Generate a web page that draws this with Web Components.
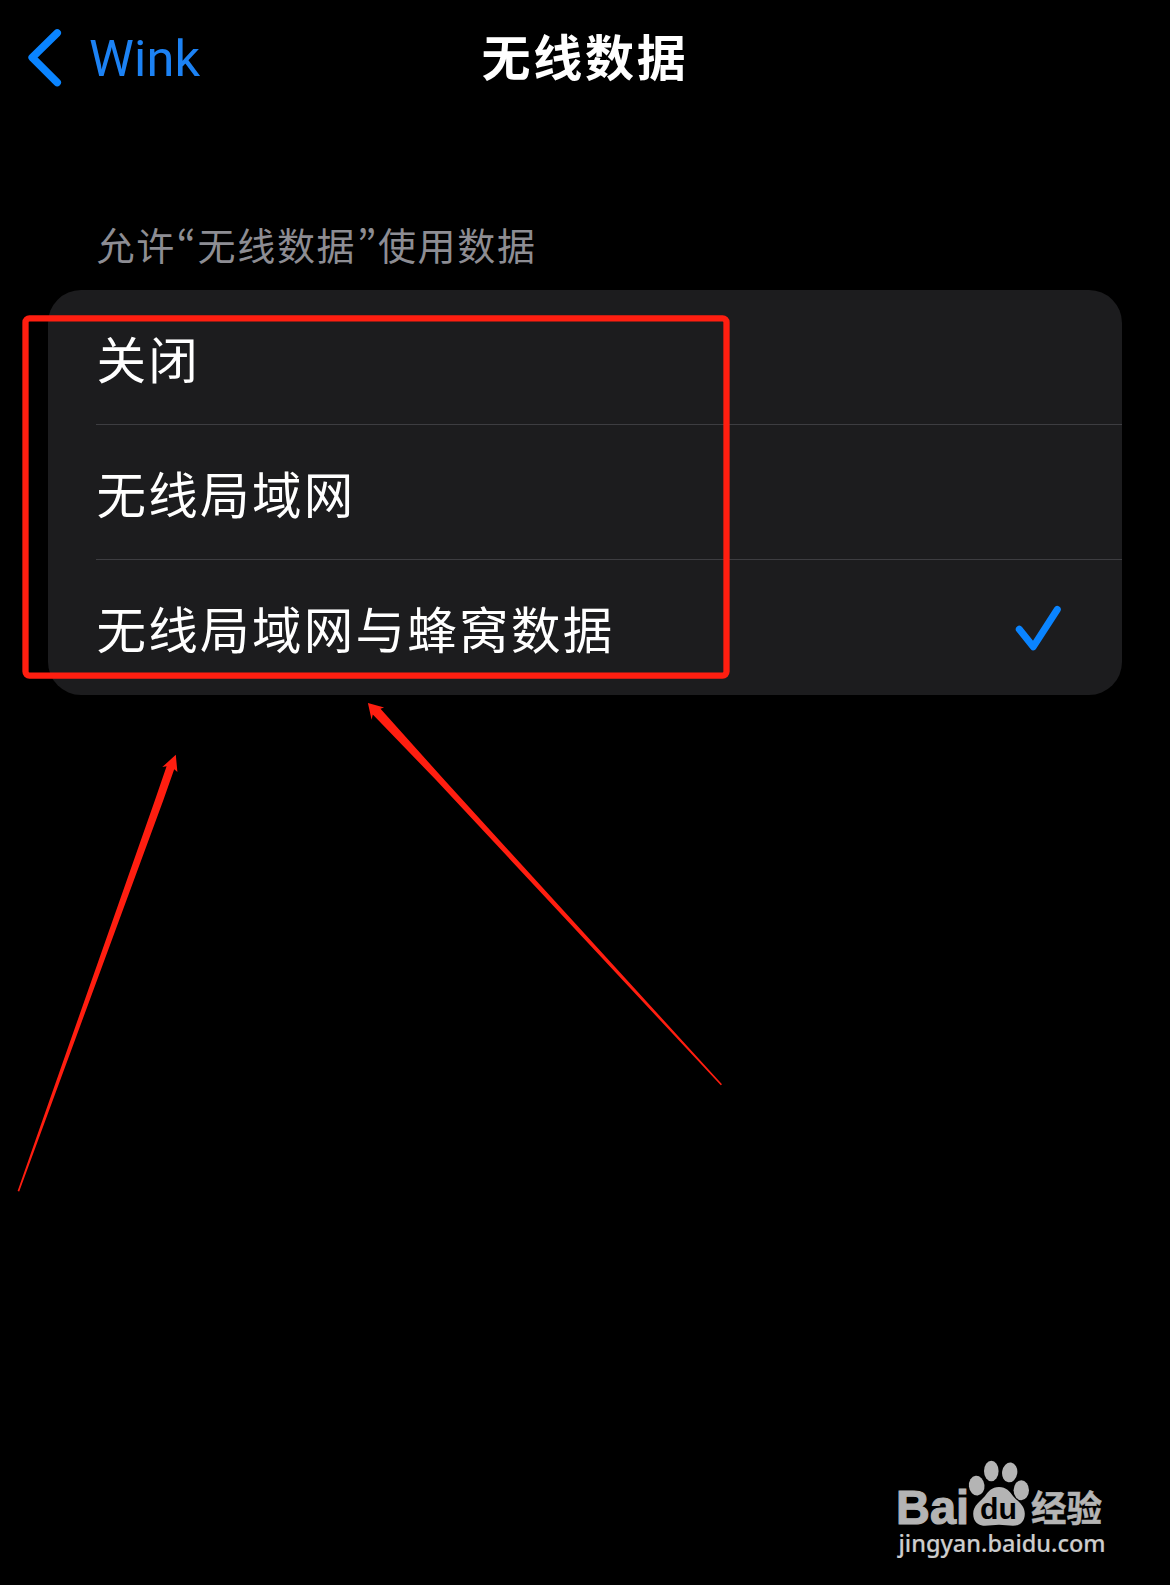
<!DOCTYPE html>
<html lang="zh-CN">
<head>
<meta charset="utf-8">
<title>无线数据</title>
<style>
  html, body {
    margin: 0;
    background: #000;
  }

  body {
    position: relative;
    width: 1170px;
    height: 1585px;
    overflow: hidden;
    color: #fff;
    font-family: Roboto, "Noto Sans CJK SC", sans-serif;
  }
</style>
</head>
<body>
  <x-navbar back="Wink">无线数据</x-navbar>
  <x-group>
    <span slot="header">允许<x-quote>“</x-quote>无线数据<x-quote>”</x-quote>使用数据</span>
    <x-row>关闭</x-row>
    <x-row>无线局域网</x-row>
    <x-row selected>无线局域网与蜂窝数据</x-row>
  </x-group>
  <x-markup></x-markup>
  <x-watermark></x-watermark>

<script>
class XNavbar extends HTMLElement {
  constructor() {
    super();
    this.attachShadow({ mode: 'open' });
    this.shadowRoot.innerHTML = `
      <style>
        :host {
          display: grid;
          grid-template-columns: 1fr auto 1fr;
          align-items: center;
          height: 116px;
          padding: 0 25px;
        }

        .back {
          display: flex;
          align-items: center;
          gap: 24px;
          color: #0a84ff;
          font-size: 50.5px;
          line-height: 60px;
        }

        .back span {
          padding-top: 1px;
          color: #1c82f4;
          letter-spacing: .2px;
        }

        svg {
          display: block;
          fill: none;
          stroke: currentColor;
          stroke-width: 7.6;
          stroke-linecap: round;
          stroke-linejoin: round;
        }

        h1 {
          margin: 0;
          padding-top: 4px;
          font-size: 49px;
          font-weight: 700;
          line-height: 60px;
          letter-spacing: 2.8px;
        }
      </style>
      <div class="back">
        <svg width="40" height="60" viewBox="0 0 40 60">
          <path d="M32.2 5L7.2 29.5l25 25"/>
        </svg>
        <span></span>
      </div>
      <h1><slot></slot></h1>
    `;
  }

  connectedCallback() {
    this.shadowRoot.querySelector('span').textContent = this.getAttribute('back') || '';
  }
}

class XQuote extends HTMLElement {
  constructor() {
    super();
    this.attachShadow({ mode: 'open' });
    this.shadowRoot.innerHTML = `
      <style>
        :host {
          display: inline-block;
          width: 20.6px;
          padding-right: 1px;
          text-align: center;
          letter-spacing: 0;
          font-family: "Noto Sans CJK KR", sans-serif;
          font-size: 41px;
          line-height: 38px;
        }
      </style>
      <slot></slot>
    `;
  }
}

class XGroup extends HTMLElement {
  constructor() {
    super();
    this.attachShadow({ mode: 'open' });
    this.shadowRoot.innerHTML = `
      <style>
        :host {
          display: block;
          padding: 104px 48px 0;
        }

        header {
          height: 70px;
          padding-left: 48.5px;
          color: #8d8d93;
          font-size: 38px;
          line-height: 54px;
          letter-spacing: 1.7px;
          white-space: nowrap;
        }

        .card {
          height: 405px;
          border-radius: 33px;
          background: #1c1c1e;
          overflow: hidden;
        }
      </style>
      <header><slot name="header"></slot></header>
      <div class="card"><slot></slot></div>
    `;
  }
}

class XRow extends HTMLElement {
  constructor() {
    super();
    this.attachShadow({ mode: 'open' });
    this.shadowRoot.innerHTML = `
      <style>
        :host {
          display: block;
          height: 135px;
          padding-left: 48px;
        }

        .row {
          box-sizing: border-box;
          display: flex;
          align-items: center;
          justify-content: space-between;
          height: 135px;
          padding: 4px 60px 0 .5px;
          border-bottom: 1px solid #3d3d41;
          font-size: 49.5px;
          line-height: 70px;
          letter-spacing: 2.3px;
        }

        .label {
          padding-top: 5px;
        }

        :host(:last-of-type) .row {
          border-bottom-color: transparent;
        }

        svg {
          display: none;
          fill: none;
          stroke: #0a84ff;
          stroke-width: 7;
          stroke-linecap: round;
          stroke-linejoin: round;
        }

        :host([selected]) svg {
          display: block;
        }
      </style>
      <div class="row">
        <span class="label"><slot></slot></span>
        <svg width="48" height="48" viewBox="0 0 48 48">
          <path d="M5.3 24.3l14 17.4L43.3 4.5"/>
        </svg>
      </div>
    `;
  }
}

// Red frame and arrows drawn over the page
class XMarkup extends HTMLElement {
  constructor() {
    super();
    this.attachShadow({ mode: 'open' });
    this.shadowRoot.innerHTML = `
      <style>
        :host {
          position: absolute;
          inset: 0;
          pointer-events: none;
        }

        svg {
          display: block;
        }
      </style>
      <svg width="1170" height="1585" viewBox="0 0 1170 1585" fill="#ff1e10">
        <rect x="25.5" y="318.3" width="701" height="357.3" rx="4" fill="none" stroke="#ff1e10" stroke-width="6.3"/>
        <path d="M175.8 754.8l1.6 17.2-3.2-2.7L163.4 800 19.2 1191.5l-1.6-.5L155 800l11.6-33.8-4.3.8z"/>
        <path d="M367.9 703l16.2 4.6-3.6 1.2L444.4 780l277.6 304.2-1.2 1.1L436 780l-63.2-65.4-1.2 5.2z"/>
      </svg>
    `;
  }
}

class XWatermark extends HTMLElement {
  constructor() {
    super();
    this.attachShadow({ mode: 'open' });
    this.shadowRoot.innerHTML = `
      <style>
        :host {
          position: absolute;
          left: 880px;
          top: 1440px;
        }

        svg {
          display: block;
        }
      </style>
      <svg width="250" height="135" viewBox="0 0 250 135" fill="#b4b4b4">
        <ellipse cx="96.7" cy="45.7" rx="7.8" ry="9.9" transform="rotate(-6 96.7 45.7)"/>
        <ellipse cx="111.3" cy="31" rx="7.3" ry="10.3"/>
        <ellipse cx="129.7" cy="32.4" rx="7.6" ry="10" transform="rotate(8 129.7 32.4)"/>
        <ellipse cx="141.3" cy="50.3" rx="7.7" ry="10"/>
        <path d="M119 47c7.2 0 10.8 4.5 14.2 9.2 4.2 5 11.6 9 11.6 17.6 0 8.2-5 12-11.8 12-5 0-9-1-14-1s-9 1-14 1c-7 0-11.8-4-11.8-12 0-8.6 7.4-12.6 11.6-17.6C108.2 51.5 111.8 47 119 47z"/>
        <text x="16" y="84" textLength="73" lengthAdjust="spacingAndGlyphs" font-family="Liberation Sans, sans-serif" font-weight="700" font-size="47.5" stroke="#b4b4b4" stroke-width="1.2">Bai</text>
        <text x="100" y="79" textLength="37" lengthAdjust="spacingAndGlyphs" font-family="Liberation Sans, sans-serif" font-weight="700" font-size="29" fill="#000">du</text>
        <text x="151" y="81.5" textLength="71" lengthAdjust="spacingAndGlyphs" font-family="Noto Sans CJK SC, sans-serif" font-weight="700" font-size="36" stroke="#b4b4b4" stroke-width=".5">经验</text>
        <text x="18.5" y="112" textLength="207" lengthAdjust="spacingAndGlyphs" font-family="Noto Sans, sans-serif" font-weight="500" font-size="24" fill="#cdcdcd" stroke="#cdcdcd" stroke-width=".2">jingyan.baidu.com</text>
      </svg>
    `;
  }
}

customElements.define('x-navbar', XNavbar);
customElements.define('x-quote', XQuote);
customElements.define('x-group', XGroup);
customElements.define('x-row', XRow);
customElements.define('x-markup', XMarkup);
customElements.define('x-watermark', XWatermark);
</script>
</body>
</html>
